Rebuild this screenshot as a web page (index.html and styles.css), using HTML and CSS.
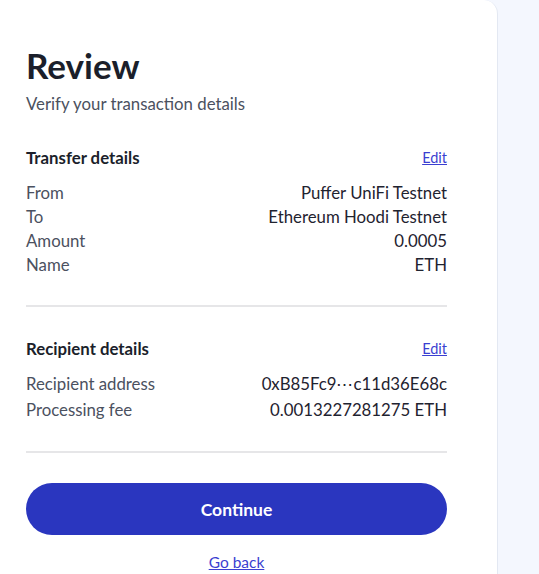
FILE: index.html
```html
<!DOCTYPE html>
<html lang="en">
<head>
<meta charset="utf-8">
<title>Review</title>
<link rel="stylesheet" href="styles.css">
</head>
<body>
<div class="page">
  <main class="card">
    <h1 class="title">Review</h1>
    <p class="subtitle">Verify your transaction details</p>

    <section class="section first">
      <div class="section-head">
        <h2>Transfer details</h2>
        <a href="#" class="edit">Edit</a>
      </div>
      <dl class="rows">
        <div class="row"><dt>From</dt><dd>Puffer UniFi Testnet</dd></div>
        <div class="row"><dt>To</dt><dd>Ethereum Hoodi Testnet</dd></div>
        <div class="row"><dt>Amount</dt><dd>0.0005</dd></div>
        <div class="row"><dt>Name</dt><dd>ETH</dd></div>
      </dl>
    </section>

    <hr class="divider">

    <section class="section">
      <div class="section-head">
        <h2>Recipient details</h2>
        <a href="#" class="edit">Edit</a>
      </div>
      <dl class="rows loose">
        <div class="row"><dt>Recipient address</dt><dd>0xB85Fc9⋯c11d36E68c</dd></div>
        <div class="row"><dt>Processing fee</dt><dd>0.0013227281275 ETH</dd></div>
      </dl>
    </section>

    <hr class="divider">

    <button class="continue" type="button">Continue</button>
    <div class="back-wrap"><a href="#" class="back">Go back</a></div>
  </main>
  <aside class="side"></aside>
</div>
</body>
</html>
```

FILE: styles.css
```css
* { box-sizing: border-box; }
html, body { margin: 0; padding: 0; }
body {
  background: #f4f7fe;
  font-family: Lato, "Noto Sans", sans-serif;
  color: #1f2330;
  overflow: hidden;
}
.page {
  display: flex;
  height: 574px;
}
.card {
  width: 498px;
  flex: none;
  background: #ffffff;
  border-right: 1px solid #e3e8f2;
  border-top-right-radius: 14px;
  padding: 43px 50px 0 26px;
}
.side { flex: 1; }
.title {
  margin: 0;
  font-size: 35px;
  line-height: 44px;
  font-weight: 700;
  color: #1b1f2b;
}
.subtitle {
  margin: 7px 0 0;
  font-size: 16.8px;
  line-height: 20px;
  color: #4b5160;
}
.section.first { margin-top: 31px; }
.section { margin-top: 29px; }
.section-head {
  display: flex;
  justify-content: space-between;
  align-items: center;
  height: 24px;
  margin-bottom: 11px;
}
.section-head h2 {
  margin: 0;
  font-size: 16.8px;
  font-weight: 700;
  color: #1b1f2b;
}
.edit {
  font-size: 14.5px;
  color: #3b3fd1;
  text-decoration: underline;
}
.rows { margin: 0; }
.row {
  display: flex;
  justify-content: space-between;
  height: 24px;
  align-items: center;
  font-size: 16.8px;
}
.rows.loose { margin-top: -1px; }
.rows.loose .row { height: 26px; }
.row dt { color: #4b5160; }
.row dd { margin: 0; color: #1f2330; }
.divider {
  border: none;
  height: 2px;
  background: #e6e6e8;
  margin: 29px 0 0;
}
.continue {
  display: block;
  width: 100%;
  height: 52px;
  margin-top: 30px;
  border: none;
  border-radius: 26px;
  background: #2a36bf;
  color: #ffffff;
  font-family: inherit;
  font-size: 17.5px;
  font-weight: 700;
}
.back-wrap {
  text-align: center;
  margin-top: 17px;
}
.back {
  font-size: 15.5px;
  color: #3b3fd1;
  text-decoration: underline;
}
```
